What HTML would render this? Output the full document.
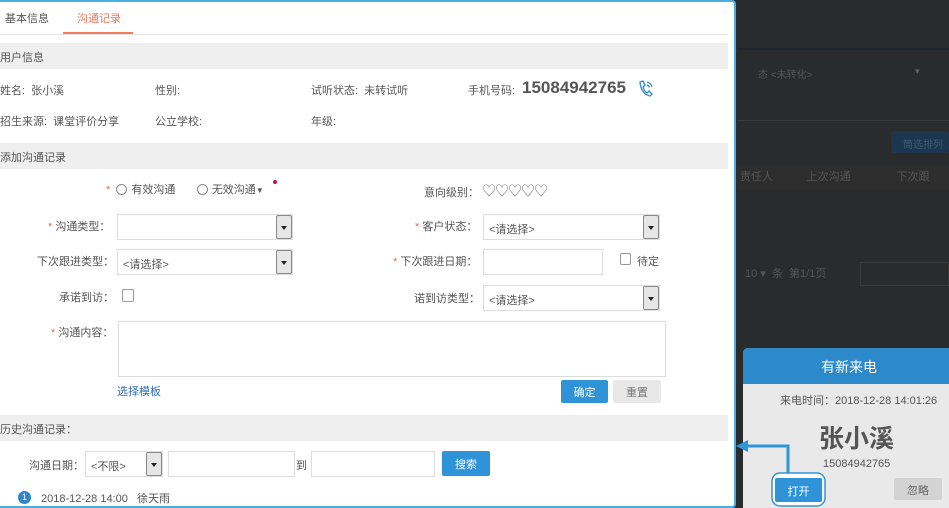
<!DOCTYPE html>
<html><head><meta charset="utf-8"><style>
*{margin:0;padding:0;box-sizing:border-box}
body{width:949px;height:508px;overflow:hidden;background:#2a2b2d;font-family:"Liberation Sans","Noto Sans CJK SC",sans-serif;font-size:11px;color:#555;position:relative}
.a{position:absolute;white-space:nowrap}
.panel{position:absolute;left:0;top:0;width:736px;height:508px;background:#fff;border:2px solid #4aaee0;border-left:none;border-radius:0 4px 4px 0}
.band{position:absolute;left:0;width:728px;background:#efefef}
.sel{position:absolute;height:26px;border:1px solid #ddd;background:#fff;padding:6px 5px;font-size:11px;color:#555}
.sel b{position:absolute;right:0;top:0;width:16px;height:24px;background:#e6e6e6;border:1px solid #888;border-radius:2px}
.sel b:after{content:"";position:absolute;left:4px;top:10px;border:3px solid transparent;border-top:4px solid #222}
.inp{position:absolute;height:26px;border:1px solid #ddd;background:#fff}
.r{color:#e06c6c}
.btn{position:absolute;color:#fff;background:#2f93d8;border-radius:2px;text-align:center;font-size:11px}
.rad{display:inline-block;width:11px;height:11px;border:1px solid #888;border-radius:50%;vertical-align:-2px;margin-right:4px}
</style></head><body>
<div class="a" style="left:737px;top:48px;width:212px;height:2px;background:#1f2630"></div>
<div class="a" style="left:737px;top:120px;width:212px;height:1px;background:#3a3a3a"></div>
<div class="a" style="left:758px;top:66px;color:#555;font-size:10px">态 &lt;未转化&gt;</div>
<div class="a" style="left:915px;top:66px;color:#666;font-size:9px">▾</div>
<div class="a" style="left:891px;top:131px;width:58px;height:22px;background:#1d3650;border-radius:3px;color:#3d5a76;font-size:10px;padding:5px 0 0 12px">筒选排列</div>
<div class="a" style="left:737px;top:165px;width:212px;height:24px;background:#2d2d2d;color:#555;font-size:11px;padding-top:3px">&nbsp;责任人 &nbsp; &nbsp; &nbsp; &nbsp; &nbsp; 上次沟通 &nbsp; &nbsp; &nbsp; &nbsp; &nbsp; &nbsp; &nbsp; 下次跟</div>
<div class="a" style="left:745px;top:265px;color:#555;font-size:11px">10 ▾ &nbsp;条 &nbsp;第1/1页</div>
<div class="a" style="left:860px;top:262px;width:89px;height:24px;border:1px solid #383838"></div>

<div class="panel"></div>
<div class="a" style="left:5px;top:10px;font-size:11px;color:#555">基本信息</div>
<div class="a" style="left:77px;top:10px;font-size:11px;color:#f07a5e">沟通记录</div>
<div class="a" style="left:63px;top:32px;width:70px;height:2px;background:#f07a5e"></div>
<div class="a" style="left:0;top:34px;width:728px;height:1px;background:#e6e6e6"></div>

<div class="band" style="top:43px;height:26px"></div>
<div class="a" style="left:0;top:49px">用户信息</div>
<div class="a" style="left:0;top:82px">姓名: &nbsp;张小溪</div>
<div class="a" style="left:155px;top:82px">性别:</div>
<div class="a" style="left:311px;top:82px">试听状态: &nbsp;未转试听</div>
<div class="a" style="left:468px;top:82px">手机号码:</div>
<div class="a" style="left:522px;top:78px;font-size:17px;font-weight:bold;color:#555">15084942765</div>
<svg class="a" style="left:637px;top:79px" width="18" height="20" viewBox="0 0 18 20"><path d="M3 3 L6 2 L8 6 L6 8 Q7 12 10 14 L12 12 L15 15 L13 17 Q4 15 3 3Z" fill="none" stroke="#3a8fd0" stroke-width="1.4"/><path d="M10 3 Q14 4 15 8 M10 6 Q12 6.5 12.5 8.5" fill="none" stroke="#3a8fd0" stroke-width="1.3"/></svg>
<div class="a" style="left:0;top:113px">招生来源: &nbsp;课堂评价分享</div>
<div class="a" style="left:155px;top:113px">公立学校:</div>
<div class="a" style="left:311px;top:113px">年级:</div>

<div class="band" style="top:143px;height:26px"></div>
<div class="a" style="left:0;top:149px">添加沟通记录</div>

<div class="a" style="left:106px;top:181px"><span class="r">*</span> &nbsp;<span class="rad"></span>有效沟通 &nbsp; &nbsp; &nbsp; <span class="rad"></span>无效沟通<span style="font-size:8px">▼</span></div>
<div class="a" style="left:273px;top:180px;width:4px;height:4px;border-radius:50%;background:#c8104a"></div>
<div class="a" style="left:424px;top:181px">意向级别： <span style="font-size:14px;color:#777;letter-spacing:-1px">♡♡♡♡♡</span></div>

<div class="a" style="left:48px;top:218px"><span class="r">*</span> 沟通类型：</div>
<div class="sel" style="left:117px;top:214px;width:176px"><b></b></div>
<div class="a" style="left:415px;top:218px"><span class="r">*</span> 客户状态：</div>
<div class="sel" style="left:483px;top:214px;width:177px">&lt;请选择&gt;<b></b></div>

<div class="a" style="left:37px;top:253px">下次跟进类型：</div>
<div class="sel" style="left:117px;top:249px;width:176px">&lt;请选择&gt;<b></b></div>
<div class="a" style="left:393px;top:253px"><span class="r">*</span> 下次跟进日期：</div>
<div class="inp" style="left:483px;top:249px;width:120px"></div>
<div class="a" style="left:620px;top:253px;width:11px;height:12px;border:1px solid #999;border-radius:2px"></div>
<div class="a" style="left:637px;top:253px">待定</div>

<div class="a" style="left:59px;top:289px">承诺到访：</div>
<div class="a" style="left:122px;top:289px;width:12px;height:13px;border:1px solid #999;border-radius:2px"></div>
<div class="a" style="left:414px;top:290px">诺到访类型：</div>
<div class="sel" style="left:483px;top:285px;width:177px">&lt;请选择&gt;<b></b></div>

<div class="a" style="left:51px;top:324px"><span class="r">*</span> 沟通内容：</div>
<div class="inp" style="left:118px;top:321px;width:548px;height:56px"></div>
<div class="a" style="left:117px;top:383px;color:#2c6db3">选择模板</div>
<div class="btn" style="left:561px;top:380px;width:47px;height:23px;padding-top:4px">确定</div>
<div class="btn" style="left:613px;top:380px;width:48px;height:23px;padding-top:4px;background:#e8e8e8;color:#777">重置</div>

<div class="band" style="top:415px;height:26px"></div>
<div class="a" style="left:0;top:421px">历史沟通记录：</div>
<div class="a" style="left:29px;top:457px">沟通日期：</div>
<div class="sel" style="left:85px;top:451px;width:78px">&lt;不限&gt;<b></b></div>
<div class="inp" style="left:168px;top:451px;width:127px"></div>
<div class="a" style="left:296px;top:457px">到</div>
<div class="inp" style="left:311px;top:451px;width:124px"></div>
<div class="btn" style="left:442px;top:451px;width:48px;height:25px;padding-top:5px">搜索</div>
<div class="a" style="left:18px;top:491px;width:13px;height:13px;border-radius:50%;background:#2f85c8;color:#fff;font-size:9px;text-align:center;line-height:13px">1</div>
<div class="a" style="left:41px;top:490px">2018-12-28 14:00 &nbsp; 徐天雨</div>

<div class="a" style="left:743px;top:348px;width:206px;height:160px;background:#e9e9e9;border-radius:5px 0 0 0;overflow:hidden">
<div style="height:36px;background:#2c8acb;color:#fff;font-size:14px;text-align:center;padding-top:9px;padding-left:6px">有新来电</div>
<div class="a" style="left:37px;top:44px;font-size:11px;color:#555">来电时间：2018-12-28 14:01:26</div>
<div class="a" style="left:76px;top:71px;font-size:25px;font-weight:bold;color:#555">张小溪</div>
<div class="a" style="left:80px;top:110px;font-size:11px;color:#555">15084942765</div>
<div class="a" style="left:151px;top:130px;width:48px;height:22px;background:#d3d3d3;border-radius:2px;color:#666;text-align:center;padding-top:4px">忽略</div>
</div>
<svg class="a" style="left:733px;top:436px" width="100" height="72"><path d="M55 38 V10 H12" fill="none" stroke="#2c96d8" stroke-width="3"/><path d="M3 10 L15 4 L15 16Z" fill="#2c96d8"/><rect x="39" y="37" width="53" height="33" rx="8" fill="#fff" stroke="#2c96d8" stroke-width="1.5"/></svg>
<div class="btn" style="left:775px;top:478px;width:47px;height:24px;padding-top:5px">打开</div>
</body></html>
